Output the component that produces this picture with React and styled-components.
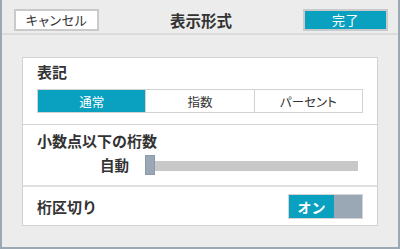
import React from "react";
import styled, { createGlobalStyle } from "styled-components";

const GlobalStyle = createGlobalStyle`
  html, body {
    margin: 0;
    padding: 0;
    background: #ececec;
  }
  body {
    font-family: "Noto Sans CJK JP", "Noto Sans", sans-serif;
    color: #333;
  }
`;

const Frame = styled.div`
  width: 400px;
  height: 249px;
  box-sizing: border-box;
  background: #ececec;
  border: 2px solid #9ba7b3;
  border-top: none;
  display: flex;
  flex-direction: column;
`;

const Header = styled.div`
  height: 35px;
  box-sizing: border-box;
  padding: 9px 10px 0 12px;
  display: flex;
  align-items: flex-start;
  justify-content: space-between;
  border-bottom: 2px solid #dcdcdc;
`;

const HeadButton = styled.button`
  width: 85px;
  height: 22px;
  box-sizing: border-box;
  border: 2px solid #cacaca;
  background: ${(p) => (p.$primary ? "#0aa0c0" : "#fff")};
  color: ${(p) => (p.$primary ? "#fff" : "#333")};
  font-family: inherit;
  font-size: 13px;
  line-height: 18px;
  padding: 0;
  font-feature-settings: "palt";
  letter-spacing: 0.5px;
`;

const Title = styled.div`
  font-size: 15.5px;
  font-weight: 700;
  line-height: 22px;
  color: #333;
`;

const Body = styled.div`
  flex: 1;
  padding: 22px 20px 21px 20px;
  display: flex;
`;

const Panel = styled.div`
  flex: 1;
  background: #fff;
  border: 1px solid #d2d2d2;
  display: flex;
  flex-direction: column;
`;

const Section = styled.div`
  padding: ${(p) => p.$pad};
  border-bottom: ${(p) => p.$line || "none"};
  display: flex;
  flex-direction: ${(p) => (p.$row ? "row" : "column")};
  align-items: ${(p) => (p.$row ? "center" : "stretch")};
  justify-content: ${(p) => (p.$row ? "space-between" : "flex-start")};
`;

const Label = styled.div`
  font-size: 15px;
  font-weight: 700;
  line-height: 20px;
  color: #333;
`;

const Segmented = styled.div`
  margin-top: 7px;
  height: 24px;
  display: flex;
  border: 1px solid #d2d2d2;
  box-sizing: border-box;
`;

const Segment = styled.div`
  flex: 1;
  display: flex;
  align-items: center;
  justify-content: center;
  font-size: 12.5px;
  font-feature-settings: "palt";
  background: ${(p) => (p.$active ? "#0aa0c0" : "#fff")};
  color: ${(p) => (p.$active ? "#fff" : "#333")};
  & + & {
    border-left: 1px solid #d2d2d2;
  }
`;

const SliderRow = styled.div`
  margin-top: 4px;
  height: 20px;
  display: flex;
  align-items: center;
`;

const AutoLabel = styled.div`
  margin-left: 63px;
  width: 45px;
  font-size: 14.5px;
  font-weight: 700;
  line-height: 20px;
  color: #333;
`;

const Slider = styled.div`
  flex: 1;
  margin-right: 5px;
  display: flex;
  align-items: center;
`;

const Thumb = styled.div`
  width: 10px;
  height: 20px;
  box-sizing: border-box;
  background: #9aa8b5;
  border: 1px solid #8d9ba8;
`;

const Track = styled.div`
  flex: 1;
  height: 10px;
  margin-top: 2px;
  background: #c8c8c8;
`;

const Toggle = styled.div`
  width: 75px;
  height: 25px;
  box-sizing: border-box;
  border: 1px solid #d4d4d4;
  display: flex;
`;

const ToggleOn = styled.div`
  width: 45px;
  background: #0aa0c0;
  color: #fff;
  font-size: 14px;
  font-weight: 700;
  display: flex;
  align-items: center;
  justify-content: center;
`;

const ToggleKnob = styled.div`
  flex: 1;
  background: #9aa8b5;
`;

export default function App() {
  return (
    <>
      <GlobalStyle />
      <Frame>
        <Header>
          <HeadButton>キャンセル</HeadButton>
          <Title>表示形式</Title>
          <HeadButton $primary>完了</HeadButton>
        </Header>
        <Body>
          <Panel>
            <Section $pad="4px 14px 11px 14px" $line="1px solid #d4d4d4">
              <Label>表記</Label>
              <Segmented>
                <Segment $active>通常</Segment>
                <Segment>指数</Segment>
                <Segment>パーセント</Segment>
              </Segmented>
            </Section>
            <Section $pad="6px 14px 10px 14px" $line="2px solid #e0e0e0">
              <Label>小数点以下の桁数</Label>
              <SliderRow>
                <AutoLabel>自動</AutoLabel>
                <Slider>
                  <Thumb />
                  <Track />
                </Slider>
              </SliderRow>
            </Section>
            <Section $row $pad="7px 14px 6px 14px">
              <Label>桁区切り</Label>
              <Toggle>
                <ToggleOn>オン</ToggleOn>
                <ToggleKnob />
              </Toggle>
            </Section>
          </Panel>
        </Body>
      </Frame>
    </>
  );
}
